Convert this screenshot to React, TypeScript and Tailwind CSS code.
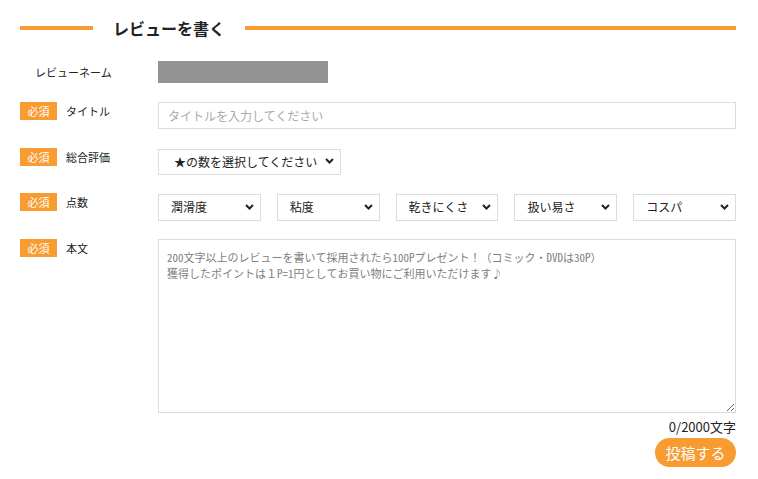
import React from "react";

const ORANGE = "bg-[#f89c31]";

function Chevron() {
  return (
    <svg width="9" height="6" viewBox="0 0 9 6" className="pointer-events-none absolute right-[7px] top-1/2 -translate-y-1/2">
      <path d="M1 1 L4.5 4.5 L8 1" fill="none" stroke="#222" strokeWidth="2" />
    </svg>
  );
}

function Select({ label, pl = "pl-[12px]", className = "" }: { label: string; pl?: string; className?: string }) {
  return (
    <div className={`relative h-full ${className}`}>
      <select
        className={`h-full w-full appearance-none border border-[#dcdcdc] bg-white ${pl} pr-[18px] text-[12px] text-[#222] outline-none`}
        defaultValue={label}
      >
        <option>{label}</option>
      </select>
      <Chevron />
    </div>
  );
}

function Badge() {
  return (
    <span className={`flex h-[18px] w-[37px] items-center justify-center ${ORANGE} text-[11px] leading-none text-white`}>
      必須
    </span>
  );
}

function Label({ text }: { text: string }) {
  return (
    <div className="flex h-[18px] w-[138px] shrink-0 items-center gap-[9px]">
      <Badge />
      <span className="text-[11px] text-[#222]">{text}</span>
    </div>
  );
}

export default function App() {
  return (
    <div
      className="w-[758px] h-[479px] bg-white px-[20px] pt-[16px]"
      style={{ fontFamily: '"Noto Sans CJK JP", "Noto Sans", sans-serif' }}
    >
      <div className="w-[716px]">
        {/* Header */}
        <div className="flex h-[24px] items-center">
          <div className={`h-[4px] w-[73px] ${ORANGE}`} />
          <h2 className="mx-[20px] text-[16px] font-bold leading-none text-[#222]">レビューを書く</h2>
          <div className={`h-[4px] flex-1 ${ORANGE}`} />
        </div>

        {/* Review name */}
        <div className="mt-[21px] flex h-[22px] items-center">
          <div className="w-[138px] shrink-0 pl-[15px] text-[11px] text-[#222]">レビューネーム</div>
          <div className="h-[22px] w-[170px] bg-[#939393]" />
        </div>

        {/* Title */}
        <div className="mt-[19px] flex">
          <Label text="タイトル" />
          <input
            className="h-[27px] flex-1 border border-[#dcdcdc] px-[9px] text-[12px] text-[#222] outline-none placeholder:text-[#aaa]"
            placeholder="タイトルを入力してください"
          />
        </div>

        {/* Rating */}
        <div className="mt-[19px] flex">
          <Label text="総合評価" />
          <div className="h-[26px] w-[183px]">
            <Select label="★の数を選択してください" pl="pl-[15px]" />
          </div>
        </div>

        {/* Score */}
        <div className="mt-[19px] flex">
          <Label text="点数" />
          <div className="grid h-[27px] flex-1 grid-cols-5 gap-[16px]">
            <Select label="潤滑度" />
            <Select label="粘度" />
            <Select label="乾きにくさ" />
            <Select label="扱い易さ" />
            <Select label="コスパ" />
          </div>
        </div>

        {/* Body */}
        <div className="mt-[19px] flex">
          <Label text="本文" />
          <textarea
            className="h-[174px] flex-1 border border-[#dcdcdc] px-[8px] pt-[9px] text-[11px] leading-[16px] text-[#222] outline-none placeholder:text-[#808080]"
            style={{ fontFamily: '"Noto Sans Mono CJK JP", "Noto Sans CJK JP", monospace' }}
            placeholder={"200文字以上のレビューを書いて採用されたら100Pプレゼント！（コミック・DVDは30P）\n獲得したポイントは１P=1円としてお買い物にご利用いただけます♪"}
          />
        </div>

        <div className="mt-[6px] text-right text-[13px] leading-[16px] text-[#222]">0/2000文字</div>
        <div className="mt-[3px] flex justify-end">
          <button className={`h-[29px] w-[81px] rounded-full ${ORANGE} text-[15px] leading-none text-white`}>
            投稿する
          </button>
        </div>
      </div>
    </div>
  );
}
